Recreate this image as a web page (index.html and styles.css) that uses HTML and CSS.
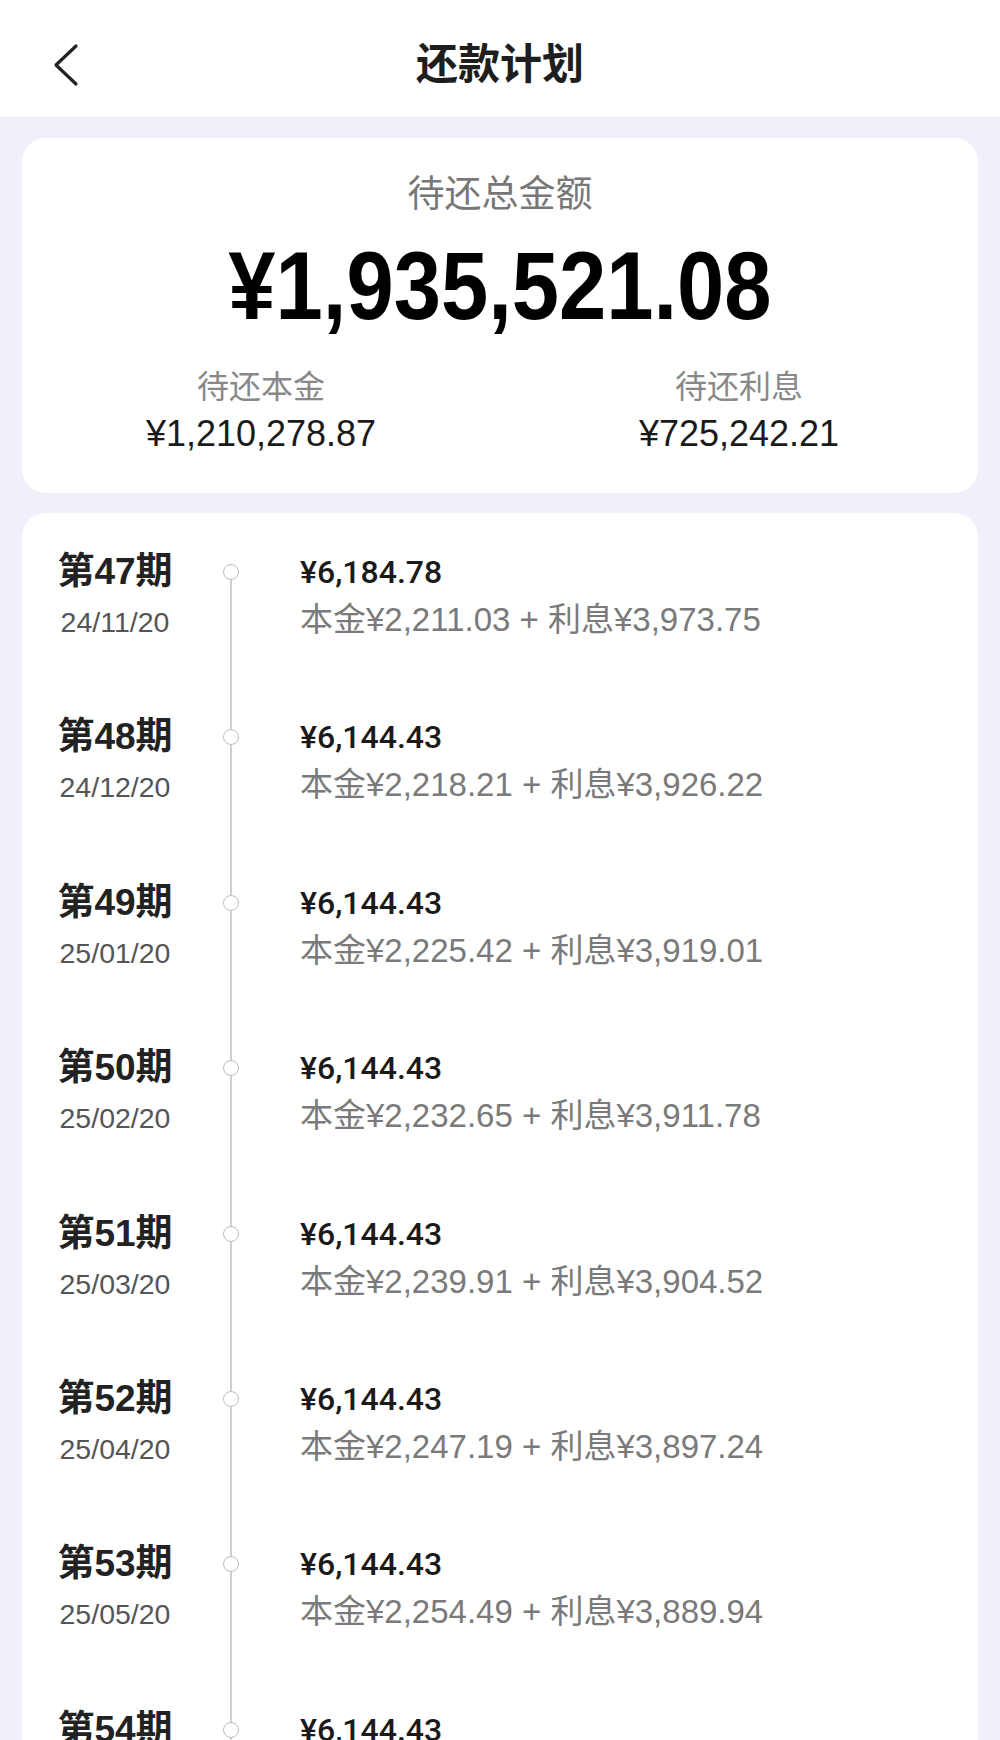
FILE: index.html
```html
<!DOCTYPE html>
<html lang="zh-CN">
<head>
    <meta charset="UTF-8">
    <meta name="viewport" content="width=device-width, initial-scale=1.0">
    <title>还款计划</title>
    <link rel="stylesheet" href="styles.css">
</head>
<body>
    <!-- Barre du haut -->
    <header class="topbar">
        <div class="back">
            <svg width="26" height="44" viewBox="0 0 26 44">
                <path d="M23 3 L3 22 L23 41" fill="none" stroke="#222" stroke-width="3.2" stroke-linecap="round" stroke-linejoin="round"/>
            </svg>
        </div>
        <h1 class="title">还款计划</h1>
        <div></div>
    </header>

    <main class="page">
        <!-- Résumé -->
        <section class="summary">
            <div class="summary-label">待还总金额</div>
            <div class="summary-total"><span>¥1,935,521.08</span></div>
            <div class="summary-split">
                <div class="split-item">
                    <div class="split-label">待还本金</div>
                    <div class="split-value">¥1,210,278.87</div>
                </div>
                <div class="split-item">
                    <div class="split-label">待还利息</div>
                    <div class="split-value">¥725,242.21</div>
                </div>
            </div>
        </section>

        <!-- Échéancier -->
        <section class="schedule">
            <div class="row first">
                <div class="period">
                    <div class="period-name">第47期</div>
                    <div class="period-date">24/11/20</div>
                </div>
                <div class="track"><span class="seg-top"></span><span class="dot"></span><span class="seg"></span></div>
                <div class="detail">
                    <div class="amount">¥6,184.78</div>
                    <div class="breakdown">本金¥2,211.03 + 利息¥3,973.75</div>
                </div>
            </div>
            <div class="row">
                <div class="period">
                    <div class="period-name">第48期</div>
                    <div class="period-date">24/12/20</div>
                </div>
                <div class="track"><span class="seg-top"></span><span class="dot"></span><span class="seg"></span></div>
                <div class="detail">
                    <div class="amount">¥6,144.43</div>
                    <div class="breakdown">本金¥2,218.21 + 利息¥3,926.22</div>
                </div>
            </div>
            <div class="row">
                <div class="period">
                    <div class="period-name">第49期</div>
                    <div class="period-date">25/01/20</div>
                </div>
                <div class="track"><span class="seg-top"></span><span class="dot"></span><span class="seg"></span></div>
                <div class="detail">
                    <div class="amount">¥6,144.43</div>
                    <div class="breakdown">本金¥2,225.42 + 利息¥3,919.01</div>
                </div>
            </div>
            <div class="row">
                <div class="period">
                    <div class="period-name">第50期</div>
                    <div class="period-date">25/02/20</div>
                </div>
                <div class="track"><span class="seg-top"></span><span class="dot"></span><span class="seg"></span></div>
                <div class="detail">
                    <div class="amount">¥6,144.43</div>
                    <div class="breakdown">本金¥2,232.65 + 利息¥3,911.78</div>
                </div>
            </div>
            <div class="row">
                <div class="period">
                    <div class="period-name">第51期</div>
                    <div class="period-date">25/03/20</div>
                </div>
                <div class="track"><span class="seg-top"></span><span class="dot"></span><span class="seg"></span></div>
                <div class="detail">
                    <div class="amount">¥6,144.43</div>
                    <div class="breakdown">本金¥2,239.91 + 利息¥3,904.52</div>
                </div>
            </div>
            <div class="row">
                <div class="period">
                    <div class="period-name">第52期</div>
                    <div class="period-date">25/04/20</div>
                </div>
                <div class="track"><span class="seg-top"></span><span class="dot"></span><span class="seg"></span></div>
                <div class="detail">
                    <div class="amount">¥6,144.43</div>
                    <div class="breakdown">本金¥2,247.19 + 利息¥3,897.24</div>
                </div>
            </div>
            <div class="row">
                <div class="period">
                    <div class="period-name">第53期</div>
                    <div class="period-date">25/05/20</div>
                </div>
                <div class="track"><span class="seg-top"></span><span class="dot"></span><span class="seg"></span></div>
                <div class="detail">
                    <div class="amount">¥6,144.43</div>
                    <div class="breakdown">本金¥2,254.49 + 利息¥3,889.94</div>
                </div>
            </div>
            <div class="row">
                <div class="period">
                    <div class="period-name">第54期</div>
                    <div class="period-date">25/06/20</div>
                </div>
                <div class="track"><span class="seg-top"></span><span class="dot"></span><span class="seg"></span></div>
                <div class="detail">
                    <div class="amount">¥6,144.43</div>
                    <div class="breakdown">本金¥2,261.82 + 利息¥3,882.61</div>
                </div>
            </div>
        </section>
    </main>
</body>
</html>
```

FILE: styles.css
```css
:root {
  --bg: #f0f0fa;
  --line: #cfcfd4;
}

body {
  margin: 0;
  background: var(--bg);
  font-family: "Liberation Sans", "Noto Sans CJK SC", sans-serif;
  color: #222;
}

/* Barre du haut */
.topbar {
  height: 118px;
  box-sizing: border-box;
  padding-top: 12px;
  background: #fff;
  border-bottom: 1px solid #e9e9f1;
  display: grid;
  grid-template-columns: 1fr auto 1fr;
  align-items: center;
}

.back {
  padding-left: 53px;
  display: flex;
  align-items: center;
}

.title {
  margin: 0;
  font-size: 42px;
  line-height: 50px;
  font-weight: 600;
  color: #1e1e1e;
}

.page {
  padding: 20px 22px 0;
}

/* Carte résumé */
.summary {
  background: #fff;
  border-radius: 24px;
  padding: 35px 0 37px;
  text-align: center;
}

.summary-label {
  font-size: 37px;
  line-height: 44px;
  color: #777;
}

.summary-total {
  margin-top: 19px;
  font-size: 96px;
  line-height: 100px;
  font-weight: bold;
  color: #000;
}

.summary-total span {
  display: inline-block;
  transform: scaleX(0.885); /* chiffres plus étroits */
}

.summary-split {
  margin-top: 31px;
  display: grid;
  grid-template-columns: 1fr 1fr;
}

.split-label {
  font-size: 32px;
  line-height: 40px;
  color: #888;
}

.split-value {
  margin-top: 5px;
  font-size: 36px;
  line-height: 44px;
  color: #1a1a1a;
}

/* Échéancier */
.schedule {
  margin-top: 20px;
  background: #fff;
  border-radius: 24px 24px 0 0;
  padding-top: 36px;
}

.row {
  height: 165.4px;
  display: grid;
  grid-template-columns: 150px 82px 1fr;
  padding-left: 18px;
}

.period {
  text-align: center;
}

.period-name {
  font-size: 37px;
  line-height: 46px;
  font-weight: bold;
  color: #222;
}

.period-date {
  margin-top: 7px;
  font-size: 28.5px;
  line-height: 40px;
  color: #555;
}

/* Ligne du temps */
.track {
  display: flex;
  flex-direction: column;
  align-items: center;
}

.seg-top {
  width: 1.5px;
  height: 15px;
  background: var(--line);
}

.row.first .seg-top {
  background: transparent;
}

.dot {
  width: 16px;
  height: 16px;
  box-sizing: border-box;
  border: 1.5px solid #bdbdc2;
  border-radius: 50%;
  background: #fff;
}

.seg {
  width: 1.5px;
  flex: 1;
  background: var(--line);
}

.detail {
  padding-left: 28px;
}

.amount {
  font-family: Roboto, "Noto Sans CJK SC", sans-serif;
  font-size: 32px;
  line-height: 46px;
  font-weight: 500;
  color: #1a1a1a;
}

.breakdown {
  margin-top: 5px;
  font-size: 33px;
  line-height: 40px;
  color: #7a7a7a;
}
```
